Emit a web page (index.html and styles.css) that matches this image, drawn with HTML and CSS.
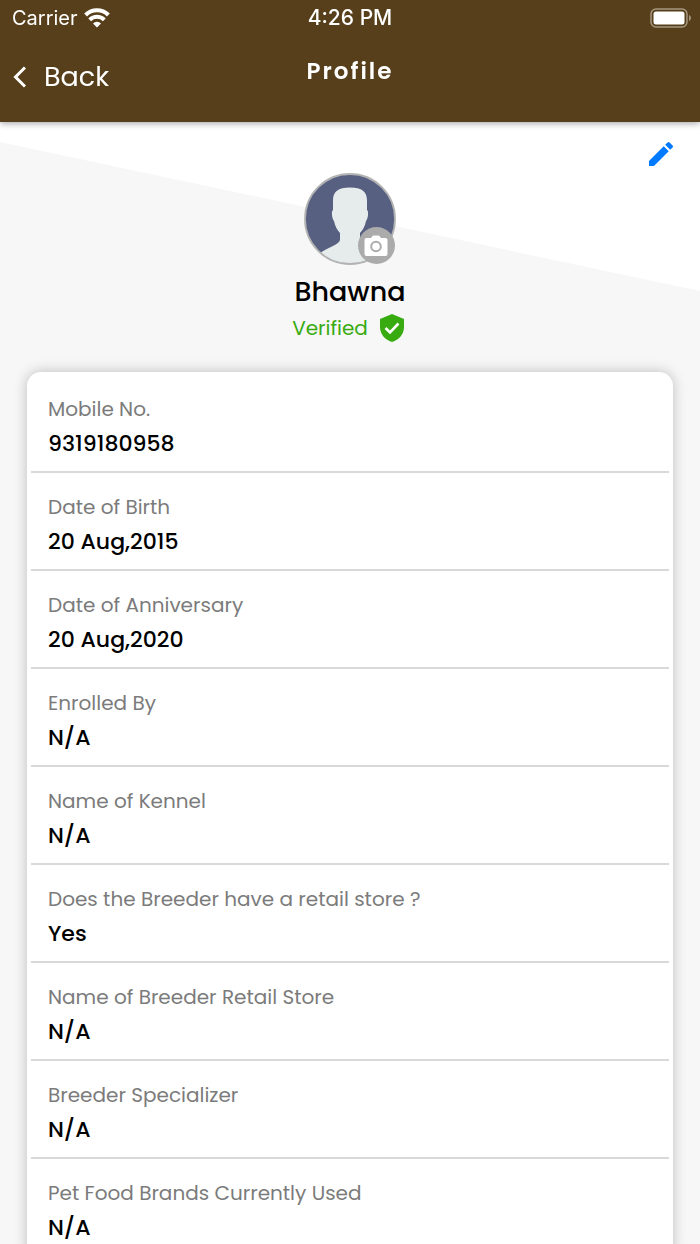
FILE: index.html
```html
<!DOCTYPE html>
<html lang="en">
<head>
  <meta charset="UTF-8">
  <meta name="viewport" content="width=device-width, initial-scale=1.0">
  <title>Profile</title>
  <link rel="stylesheet" href="styles.css">
</head>
<body>
  <div class="app">
    <header class="header">
      <div class="status-bar">
        <div class="carrier">
          <span>Carrier</span>
          <svg width="26" height="20" viewBox="0 0 26 20" fill="none" stroke="#fff" stroke-width="4">
            <path d="M1.600 7a16 16 0 0 1 22.800 0"/>
            <path d="M5.700 11.800a10.400 10.400 0 0 1 14.600 0"/>
            <path d="M13 19.500l-4-4a5.700 5.700 0 0 1 8 0z" fill="#fff" stroke="none"/>
          </svg>
        </div>
        <span class="time">4:26 PM</span>
        <svg class="battery" width="42" height="20" viewBox="0 0 42 20">
          <rect x="1" y="1" width="36" height="18" rx="5" fill="none" stroke="#a5977f" stroke-width="1.5"/>
          <rect x="3.5" y="3.5" width="31" height="13" rx="2.5" fill="#fff"/>
          <path d="M39 7c2.6.8 2.6 5.2 0 6z" fill="#a5977f"/>
        </svg>
      </div>
      <nav class="nav">
        <a href="#" class="back">
          <svg width="14" height="22" viewBox="0 0 14 22" fill="none" stroke="#fff" stroke-width="3">
            <path d="M13 1.500L3.500 11l9.500 9.500"/>
          </svg>
          Back
        </a>
        <h1 class="title">Profile</h1>
      </nav>
    </header>

    <main class="content">
      <section class="profile">
        <div class="person">
          <div class="avatar">
            <svg width="92" height="92" viewBox="0 0 92 92">
              <defs>
                <clipPath id="circle"><circle cx="46" cy="46" r="45"/></clipPath>
              </defs>
              <circle cx="46" cy="46" r="45" fill="#576080"/>
              <path clip-path="url(#circle)" fill="#e6ecec" d="M46 14.500c-12 0-17 4-17 13V37c-2 1-1 9 1 11 1 5 3 9 6 12v7c-1 5-12 7-21 14v12h62V81c-9-7-20-9-21-14v-7c3-3 5-7 6-12 2-2 3-10 1-11v-9.500c0-9-5-13-17-13z"/>
              <circle cx="46" cy="46" r="45" fill="none" stroke="#b3b3b3" stroke-width="1.800"/>
            </svg>
            <button class="camera" aria-label="Change photo">
              <svg width="24" height="22" viewBox="0 0 24 22">
                <path fill="#fff" d="M2.500 3H7l2-2.500h6L17 3h4.500A2 2 0 0 1 23.500 5v14a2 2 0 0 1-2 2h-19a2 2 0 0 1-2-2V5a2 2 0 0 1 2-2z"/>
                <circle cx="12" cy="11.500" r="4.800" fill="none" stroke="#ababab" stroke-width="2"/>
              </svg>
            </button>
          </div>
          <h2 class="name">Bhawna</h2>
          <p class="verified">
            Verified
            <svg width="24" height="28" viewBox="0 0 24 28">
              <path fill="#38ab10" d="M12 0l12 5v8c0 7-5 13-12 15C5 26 0 20 0 13V5z"/>
              <path d="M5.500 14l4.500 4.500 8.500-9" fill="none" stroke="#fff" stroke-width="2.600"/>
            </svg>
          </p>
        </div>
        <button class="edit" aria-label="Edit profile">
          <svg width="32" height="32" viewBox="0 0 24 24">
            <path fill="#007aff" d="M3 17.250V21h3.750L17.810 9.940l-3.750-3.750L3 17.250zM20.710 7.040a1 1 0 0 0 0-1.410l-2.340-2.340a1 1 0 0 0-1.410 0l-1.830 1.830 3.750 3.750 1.830-1.830z"/>
          </svg>
        </button>
      </section>

      <dl class="card">
        <div class="row"><dt>Mobile No.</dt><dd>9319180958</dd></div>
        <div class="row"><dt>Date of Birth</dt><dd>20 Aug,2015</dd></div>
        <div class="row"><dt>Date of Anniversary</dt><dd>20 Aug,2020</dd></div>
        <div class="row"><dt>Enrolled By</dt><dd>N/A</dd></div>
        <div class="row"><dt>Name of Kennel</dt><dd>N/A</dd></div>
        <div class="row"><dt>Does the Breeder have a retail store ?</dt><dd>Yes</dd></div>
        <div class="row"><dt>Name of Breeder Retail Store</dt><dd>N/A</dd></div>
        <div class="row"><dt>Breeder Specializer</dt><dd>N/A</dd></div>
        <div class="row"><dt>Pet Food Brands Currently Used</dt><dd>N/A</dd></div>
      </dl>
    </main>
  </div>
</body>
</html>
```
FILE: styles.css
```css
* {
  box-sizing: border-box;
}
body {
  margin: 0;
  font-family: Poppins, Inter, sans-serif;
  color: #000;
}
h1, h2, p, dl, dd {
  margin: 0;
}
button {
  border: none;
  padding: 0;
  background: none;
  cursor: pointer;
}
svg {
  display: block;
}
.app {
  display: flex;
  flex-direction: column;
  height: 100vh;
}
.header {
  position: relative;
  z-index: 1;
  flex: none;
  background: #573f1b;
  color: #fff;
  box-shadow: 0 1px 7px rgba(0, 0, 0, 0.4);
}
.status-bar {
  display: grid;
  grid-template-columns: 1fr auto 1fr;
  align-items: center;
  height: 36px;
  padding: 0 8px 1px 12px;
  font-family: Inter, sans-serif;
  font-size: 20px;
}
.carrier {
  display: flex;
  align-items: center;
  gap: 6px;
}
.time {
  padding-right: 4px;
  font-size: 21px;
  font-weight: 500;
}
.battery {
  justify-self: end;
}
.nav {
  display: grid;
  grid-template-columns: 1fr auto 1fr;
  align-items: start;
  height: 86px;
  padding: 20px 12px 0;
}
.back {
  display: flex;
  align-items: center;
  gap: 18px;
  color: #fff;
  font-size: 27px;
  line-height: 42px;
  text-decoration: none;
}
.title {
  font-size: 23px;
  font-weight: 600;
  line-height: 30px;
  letter-spacing: 2px;
}
.content {
  position: relative;
  flex: 1;
  overflow-y: auto;
  scrollbar-width: none;
  background: #fff;
}
/* slanted grey backdrop */
.content::before {
  content: "";
  position: absolute;
  inset: 0;
  background: #f7f7f7;
  clip-path: polygon(0 20px, 100% 169px, 100% 100%, 0 100%);
}
.profile {
  position: relative;
  display: grid;
  grid-template-columns: 1fr auto 1fr;
  align-items: start;
  padding: 16px 23px 27px;
}
.person {
  grid-column: 2;
  display: flex;
  flex-direction: column;
  align-items: center;
  padding-top: 35px;
}
.avatar {
  position: relative;
}
.camera {
  position: absolute;
  right: 1px;
  bottom: 1px;
  display: grid;
  place-items: center;
  width: 37px;
  height: 37px;
  border-radius: 50%;
  background: #ababab;
}
.name {
  margin-top: 8px;
  font-size: 27px;
  font-weight: 500;
  line-height: 38px;
}
.verified {
  display: flex;
  align-items: center;
  gap: 12px;
  padding-right: 4px;
  color: #38ab10;
  font-size: 20px;
  line-height: 34px;
}
.edit {
  justify-self: end;
}
.card {
  position: relative;
  margin: 0 27px;
  padding: 3px 4px;
  border-radius: 14px;
  background: #fff;
  box-shadow: 0 0 14px rgba(0, 0, 0, 0.24);
}
.row {
  padding: 17px 17px 11px;
  border-bottom: 2px solid #d9d9d9;
}
dt {
  color: #7b7b7b;
  font-size: 20px;
  line-height: 35px;
}
dd {
  font-size: 22px;
  font-weight: 500;
  line-height: 33px;
}
```
